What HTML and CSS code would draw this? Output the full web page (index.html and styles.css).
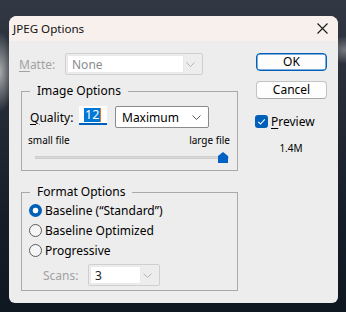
FILE: index.html
```html
<!DOCTYPE html>
<html>
<head>
<meta charset="utf-8">
<link rel="stylesheet" href="styles.css">
</head>
<body>
<div class="dialog">
  <div class="titlebar">
    <span class="title">JPEG Options</span>
    <svg class="close" width="11" height="11" viewBox="0 0 11 11"><path d="M0.5 0.5 L10.5 10.5 M10.5 0.5 L0.5 10.5" stroke="#1a1a1a" stroke-width="1.1" fill="none"/></svg>
  </div>
  <div class="content">
    <div class="left">
      <div class="matte-row">
        <span class="matte-label"><u>M</u>atte:</span>
        <div class="select disabled wide">
          <div class="field"><span>None</span></div>
          <svg class="chev" width="9" height="5" viewBox="0 0 9 5"><path d="M0.5 0.5 L4.5 4.5 L8.5 0.5" stroke="#b4b4b4" fill="none"/></svg>
        </div>
      </div>

      <div class="group g1">
        <span class="legend">Image Options</span>
        <div class="quality-row">
          <span class="q-label"><u>Q</u>uality:</span>
          <div class="q-input"><span class="sel">12</span><span class="caret"></span></div>
          <div class="select normal">
            <span>Maximum</span>
            <svg class="chev" width="9" height="5" viewBox="0 0 9 5"><path d="M0.5 0.5 L4.5 4.5 L8.5 0.5" stroke="#555" fill="none"/></svg>
          </div>
        </div>
        <div class="slider-labels"><span>small file</span><span>large file</span></div>
        <div class="slider">
          <div class="track"></div>
          <svg class="thumb" width="10" height="11" viewBox="0 0 10 11"><path d="M0 4 L5 0 L10 4 L10 11 L0 11 Z" fill="#0062c4"/></svg>
        </div>
      </div>

      <div class="group g2">
        <span class="legend">Format Options</span>
        <div class="radio-row"><span class="radio on"></span><span>Baseline (“Standard”)</span></div>
        <div class="radio-row"><span class="radio"></span><span>Baseline Optimized</span></div>
        <div class="radio-row"><span class="radio"></span><span>Progressive</span></div>
        <div class="scans-row">
          <span class="scans-label">Scans:</span>
          <div class="select disabled small">
            <div class="field"><span>3</span></div>
            <svg class="chev" width="9" height="5" viewBox="0 0 9 5"><path d="M0.5 0.5 L4.5 4.5 L8.5 0.5" stroke="#b4b4b4" fill="none"/></svg>
          </div>
        </div>
      </div>
    </div>

    <div class="right">
      <button class="btn primary">OK</button>
      <button class="btn">Cancel</button>
      <div class="check-row">
        <span class="checkbox"><svg width="13" height="13" viewBox="0 0 13 13"><path d="M3.2 6.8 L5.5 9 L9.8 4.3" stroke="#fff" stroke-width="1.1" fill="none"/></svg></span>
        <span><u>P</u>review</span>
      </div>
      <div class="size">1.4M</div>
    </div>
  </div>
</div>
</body>
</html>
```
FILE: styles.css
```css
html, body {
  margin: 0;
  padding: 0;
}
body {
  width: 346px;
  height: 312px;
  box-sizing: border-box;
  padding: 16px 8px 9px 9px;
  font-family: "Noto Sans", "Open Sans", sans-serif;
  font-size: 12px;
  color: #000;
  background:
    radial-gradient(ellipse 14px 40px at 0px 72px, rgba(200,200,200,0.8), rgba(200,200,200,0) 100%),
    radial-gradient(ellipse 20px 14px at 346px 50px, rgba(170,170,170,0.6), rgba(170,170,170,0) 100%),
    linear-gradient(180deg, #323843 0%, #272d37 30%, #151d28 70%, #0f1721 100%);
  overflow: hidden;
}
.dialog {
  width: 329px;
  height: 287px;
  background: #ededed;
  border-radius: 8px 8px 6px 6px;
  overflow: hidden;
  display: flex;
  flex-direction: column;
}
.titlebar {
  height: 25px;
  flex: none;
  background: #f7f0ec;
  display: flex;
  align-items: center;
  justify-content: space-between;
  padding: 0 10px 0 4px;
}
.title {
  font-size: 11.6px;
  line-height: 16px;
  color: #111;
  padding-top: 1px;
}
.close {
  display: block;
}
.content {
  display: flex;
  padding-top: 12px;
}
.left {
  width: 218px;
  margin-left: 10px;
  display: flex;
  flex-direction: column;
}
.matte-row {
  display: flex;
  align-items: center;
  height: 22px;
}
.matte-label {
  width: 46px;
  color: #a2a2a2;
}
u {
  text-decoration-thickness: 1px;
  text-underline-offset: 2px;
}
.select {
  box-sizing: border-box;
  height: 22px;
  display: flex;
  align-items: center;
  justify-content: space-between;
  border-radius: 2px;
}
.select.disabled {
  border: 1px solid #cfcfcf;
  padding: 1px 7px 1px 1px;
}
.select.disabled .field {
  box-sizing: border-box;
  height: 18px;
  background: #fff;
  border: 1px solid #e9e9e9;
  display: flex;
  align-items: center;
  padding-left: 4px;
  color: #8c8c8c;
  font-size: 12px;
}
.select.wide {
  width: 138px;
}
.select.wide .field {
  width: 117px;
}
.select.small {
  width: 72px;
}
.select.small .field {
  width: 51px;
  color: #222;
}
.select.normal {
  width: 94px;
  margin-left: 8px;
  border: 1px solid #8a8a8a;
  background: #fff;
  padding: 0 7px 0 6px;
  font-size: 12px;
}
.group {
  position: relative;
  box-sizing: border-box;
  width: 217px;
  margin-left: 2px;
  border: 1px solid #a9a9a9;
}
.legend {
  position: absolute;
  top: -9px;
  left: 8px;
  padding: 0 7px;
  background: #ededed;
  font-size: 12px;
  line-height: 16px;
}
.g1 {
  margin-top: 16px;
  height: 80px;
  padding: 14px 7px 0 7px;
}
.quality-row {
  display: flex;
  align-items: center;
  height: 22px;
}
.q-label {
  width: 49px;
  padding-left: 1px;
  font-size: 12px;
}
.q-input {
  box-sizing: border-box;
  width: 28px;
  height: 19px;
  background: #fff;
  border-bottom: 2px solid #005fb8;
  display: flex;
  align-items: center;
  padding-left: 5px;
  align-self: flex-start;
}
.sel {
  background: #0078d7;
  color: #fff;
  font-size: 12.5px;
  line-height: 14px;
  padding: 0 1px;
}
.caret {
  width: 1px;
  height: 14px;
  background: #e07a28;
}
.slider-labels {
  display: flex;
  justify-content: space-between;
  font-size: 10px;
  line-height: 13px;
  margin-top: 6px;
  margin-left: -1px;
}
.slider {
  position: relative;
  margin: 4px 0 0 6px;
  height: 13px;
  display: flex;
  align-items: center;
}
.track {
  width: 194px;
  height: 3px;
  box-sizing: border-box;
  background: #d9d9d9;
  border: 1px solid #cdcdcd;
}
.thumb {
  position: absolute;
  left: 183px;
  top: 1px;
}
.g2 {
  margin-top: 21px;
  height: 99px;
  padding: 7px 7px 0 7px;
}
.radio-row {
  display: flex;
  align-items: center;
  height: 20px;
  font-size: 12px;
}
.radio {
  box-sizing: border-box;
  width: 13px;
  height: 13px;
  border-radius: 50%;
  border: 1px solid #5b5b5b;
  background: #f5f5f5;
  margin-right: 3px;
}
.radio.on {
  border: none;
  background: radial-gradient(circle at center, #fff 0 2.6px, #005fb8 3.2px);
}
.scans-row {
  display: flex;
  align-items: center;
  margin-top: 4px;
  height: 22px;
}
.scans-label {
  width: 45px;
  margin-left: 14px;
  color: #a2a2a2;
  font-size: 12px;
}
.right {
  margin-left: 18px;
  width: 72px;
  display: flex;
  flex-direction: column;
  align-items: flex-start;
}
.btn {
  box-sizing: border-box;
  width: 71px;
  height: 18px;
  margin-left: 1px;
  background: #fdfdfd;
  border: 1px solid #c3c3c3;
  border-bottom-color: #a8a8a8;
  border-radius: 4px;
  font-family: inherit;
  font-size: 12px;
  line-height: 14px;
  padding: 0;
  color: #000;
}
.btn.primary {
  border: 1px solid #005fb8;
  box-shadow: inset 0 0 0 0.5px #005fb8;
}
.btn + .btn {
  margin-top: 10px;
}
.check-row {
  display: flex;
  align-items: center;
  margin-top: 14px;
  font-size: 12px;
}
.checkbox {
  width: 13px;
  height: 13px;
  border-radius: 3px;
  background: #005fb8;
  margin-right: 3px;
}
.checkbox svg {
  display: block;
}
.size {
  align-self: center;
  margin-top: 12px;
  font-size: 10px;
  line-height: 12px;
}
```
